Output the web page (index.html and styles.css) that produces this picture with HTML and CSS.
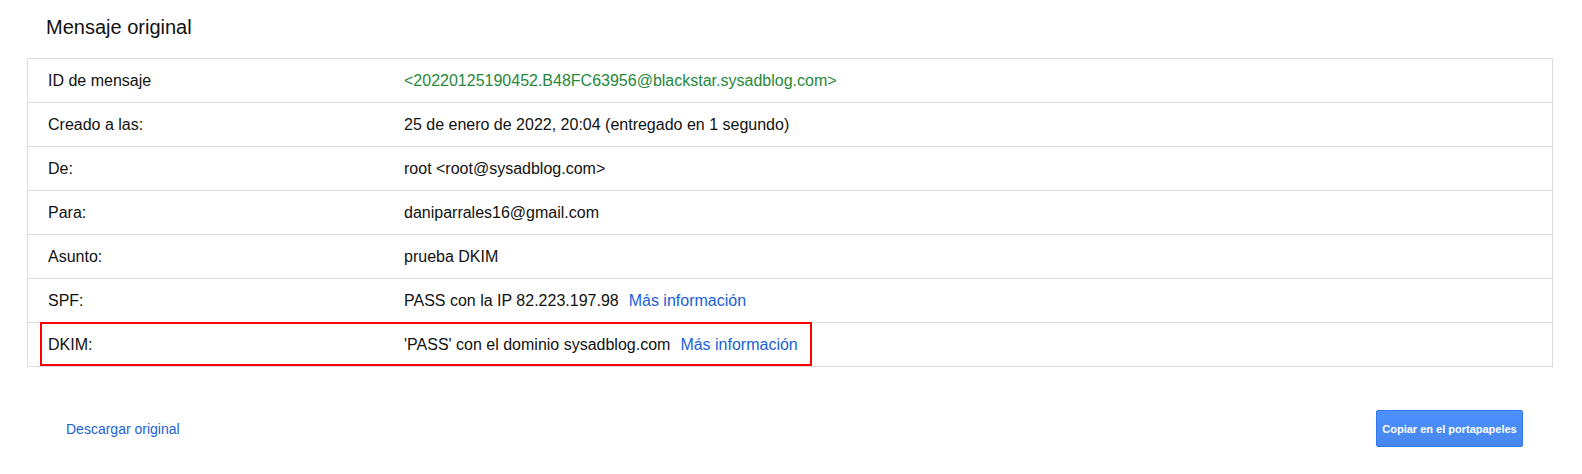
FILE: index.html
```html
<!DOCTYPE html>
<html lang="es">
<head>
<meta charset="utf-8">
<title>Mensaje original</title>
<link rel="stylesheet" href="styles.css">
</head>
<body>
<div class="page">
  <h1 class="title">Mensaje original</h1>
  <div class="table">
    <div class="row"><div class="label">ID de mensaje</div><div class="value id">&lt;20220125190452.B48FC63956@blackstar.sysadblog.com&gt;</div></div>
    <div class="row"><div class="label">Creado a las:</div><div class="value">25 de enero de 2022, 20:04 (entregado en 1 segundo)</div></div>
    <div class="row"><div class="label">De:</div><div class="value">root &lt;root@sysadblog.com&gt;</div></div>
    <div class="row"><div class="label">Para:</div><div class="value">daniparrales16@gmail.com</div></div>
    <div class="row"><div class="label">Asunto:</div><div class="value">prueba DKIM</div></div>
    <div class="row"><div class="label">SPF:</div><div class="value">PASS con la IP 82.223.197.98<a class="more" href="#">Más información</a></div></div>
    <div class="row highlighted"><div class="label">DKIM:</div><div class="value">'PASS' con el dominio sysadblog.com<a class="more" href="#">Más información</a></div><div class="mark"></div></div>
  </div>
  <div class="footer">
    <a class="download" href="#">Descargar original</a>
    <button class="copy" type="button">Copiar en el portapapeles</button>
  </div>
</div>
</body>
</html>
```

FILE: styles.css
```css
html, body {
  margin: 0;
  padding: 0;
  background: #fff;
}
body {
  font-family: "Liberation Sans", Arial, sans-serif;
  color: #111;
}
.page {
  width: 1526px;
  margin-left: 27px;
  padding-top: 16px;
}
.title {
  margin: 0 0 19px 19px;
  font-size: 20px;
  font-weight: normal;
  line-height: 23px;
  color: #111;
}
.table {
  border: 1px solid #dcdcdc;
}
.row {
  display: grid;
  grid-template-columns: 356px 1fr;
  padding-left: 20px;
  height: 43px;
  align-items: center;
  font-size: 16px;
  line-height: 18px;
  padding-top: 1px;
  box-sizing: border-box;
}
.row + .row {
  border-top: 1px solid #dcdcdc;
  height: 44px;
}
.value.id {
  color: #27883b;
}
.more {
  color: #1a5fd8;
  text-decoration: none;
  margin-left: 10px;
}
.highlighted {
  position: relative;
}
.mark {
  position: absolute;
  left: 12px;
  top: -1px;
  width: 772px;
  height: 44px;
  box-sizing: border-box;
  border: 2px solid #ff0000;
  pointer-events: none;
}
.footer {
  display: flex;
  justify-content: space-between;
  align-items: center;
  margin-top: 43px;
  padding-left: 39px;
  padding-right: 30px;
}
.download {
  font-size: 14px;
  color: #1a5fd8;
  text-decoration: none;
}
.copy {
  height: 37px;
  width: 147px;
  box-sizing: border-box;
  padding: 0;
  border: 1px solid #3079ed;
  border-radius: 2px;
  background: linear-gradient(#4d90fe, #4787ed);
  color: #fff;
  font-family: "Liberation Sans", Arial, sans-serif;
  font-size: 11px;
  font-weight: bold;
}
```
